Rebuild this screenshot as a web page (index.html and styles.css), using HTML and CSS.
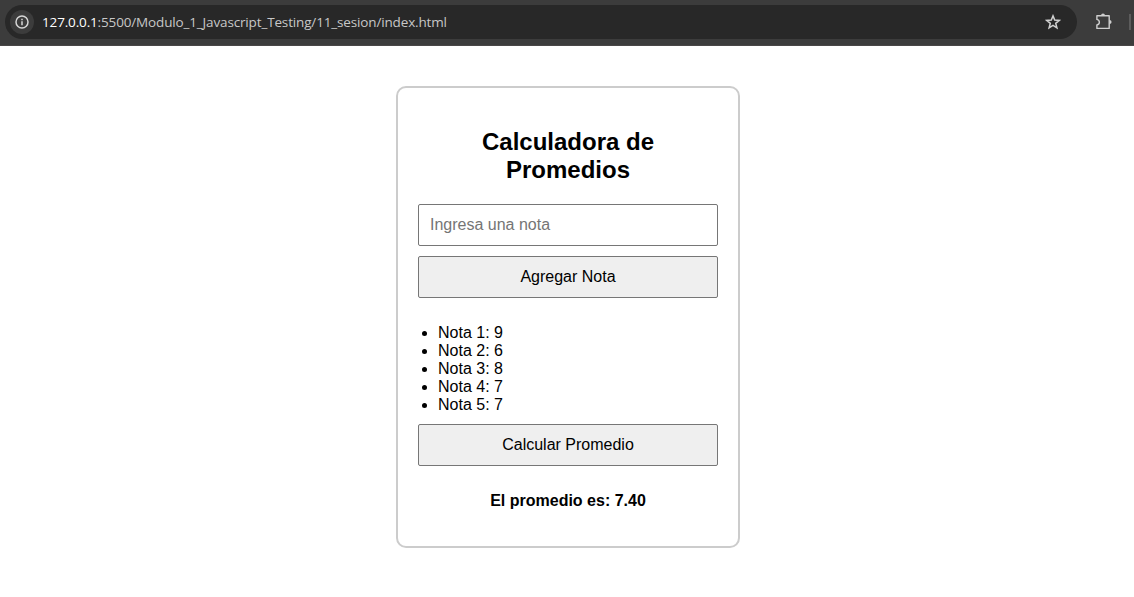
FILE: index.html
```html
<!DOCTYPE html>
<html lang="es">
<head>
<meta charset="UTF-8">
<title>Calculadora de Promedios</title>
<link rel="stylesheet" href="styles.css">
</head>
<body>
<header class="toolbar">
  <div class="omnibox">
    <span class="site-info">
      <svg width="14" height="14" viewBox="0 0 14 14" fill="none" stroke="#d6d6d6"><circle cx="7" cy="7" r="6" stroke-width="1.5"/><path d="M7 6.2V10.2M7 3.7V5.2" stroke-width="1.5"/></svg>
    </span>
    <span class="url"><span class="host">127.0.0.1</span>:5500/Modulo_1_Javascript_Testing/11_sesion/index.html</span>
    <svg class="star" width="16" height="16" viewBox="0 0 16 16" fill="none" stroke="#d0d0d0" stroke-width="1.5"><path d="M8 1.9L9.7 6.1L14.2 6.4L10.7 9.3L11.9 13.8L8 11.4L4.1 13.8L5.3 9.3L1.8 6.4L6.3 6.1Z"/></svg>
  </div>
  <svg class="puzzle" width="18" height="18" viewBox="0 0 18 18"><path d="M2.9 2.8H15.2V15.4H2.9V12C6.2 11.2 6.2 7.2 2.9 6.4Z" fill="none" stroke="#cecece" stroke-width="1.4" stroke-linejoin="round"/><path d="M7 2.7a2 2.2 0 0 1 4 0ZM15.4 7a2.2 2 0 0 1 0 4Z" fill="#cecece"/></svg>
  <span class="divider"></span>
</header>
<main class="card">
  <h2>Calculadora de Promedios</h2>
  <input class="field" type="text" placeholder="Ingresa una nota">
  <button class="field">Agregar Nota</button>
  <ul class="notes">
    <li>Nota 1: 9</li>
    <li>Nota 2: 6</li>
    <li>Nota 3: 8</li>
    <li>Nota 4: 7</li>
    <li>Nota 5: 7</li>
  </ul>
  <button class="field">Calcular Promedio</button>
  <p class="result">El promedio es: 7.40</p>
</main>
</body>
</html>
```
FILE: styles.css
```css
body {
  margin: 0;
  background: #fff;
  color: #000;
  font-family: "Liberation Sans", Arial, sans-serif;
  overflow: hidden;
}
.toolbar {
  display: flex;
  align-items: center;
  box-sizing: border-box;
  height: 46px;
  padding: 0 3px 2px 5px;
  background: #3c3c3c;
  border-bottom: 1px solid #494747;
}
.omnibox {
  display: flex;
  align-items: center;
  box-sizing: border-box;
  width: 1072px;
  height: 34px;
  padding: 0 16px 0 5px;
  border-radius: 17px;
  background: #282828;
}
.site-info {
  display: flex;
  align-items: center;
  justify-content: center;
  width: 24px;
  height: 24px;
  border-radius: 50%;
  background: #3c3c3c;
}
.url {
  margin-left: 8px;
  font: 13.5px/20px "Open Sans", "Noto Sans", sans-serif;
  letter-spacing: -0.15px;
  color: #c7c7c7;
  white-space: nowrap;
}
.host {
  color: #fff;
}
.star {
  margin-left: auto;
}
.puzzle {
  margin-left: 17px;
}
.divider {
  width: 2px;
  height: 16px;
  margin-left: auto;
  background: #5c5c5c;
}
.card {
  box-sizing: border-box;
  width: 344px;
  height: 462px;
  margin: 40px 0 0 396px;
  padding: 20px;
  border: 2px solid #ccc;
  border-radius: 10px;
  text-align: center;
}
h2 {
  margin: 20px 0;
  font-size: 24px;
  line-height: 28px;
}
.field {
  display: block;
  box-sizing: border-box;
  width: 300px;
  height: 42px;
  margin: 0 0 10px;
  padding: 10px;
  border: 1px solid #767676;
  border-radius: 2px;
  font: 16px "Liberation Sans", Arial, sans-serif;
}
input.field {
  padding-left: 11px;
}
.field::placeholder {
  color: #757575;
}
button.field {
  background: #efefef;
  color: #000;
}
.notes {
  margin: 26px 0 10px;
  padding-left: 20px;
  line-height: 18px;
  text-align: left;
}
.result {
  margin: 26px 0 0;
  font-weight: bold;
  line-height: 18px;
}
```
